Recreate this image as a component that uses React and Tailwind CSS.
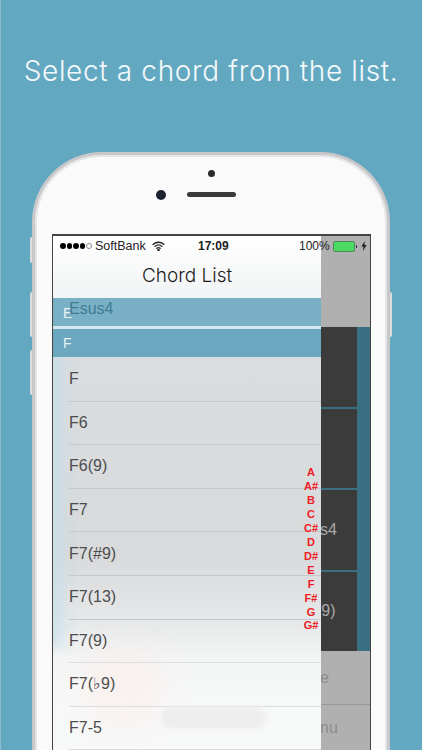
import React from 'react'

const chords = ['F', 'F6', 'F6(9)', 'F7', 'F7(#9)', 'F7(13)', 'F7(9)', 'F7(♭9)', 'F7-5']
const indexLetters = ['A', 'A#', 'B', 'C', 'C#', 'D', 'D#', 'E', 'F', 'F#', 'G', 'G#']

function Wifi() {
  return (
    <svg width="13" height="10" viewBox="0 0 13 10" fill="none" stroke="#222" strokeWidth="1.3" strokeLinecap="round">
      <path d="M1 3.4C4.2 .5 8.8 .5 12 3.4" />
      <path d="M3 5.4C5 3.7 8 3.7 10 5.4" />
      <path d="M4.8 7.3C5.8 6.5 7.2 6.5 8.2 7.3" />
      <circle cx="6.5" cy="8.9" r=".6" fill="#222" />
    </svg>
  )
}

function StatusBar() {
  return (
    <div className="absolute left-0 right-0 top-0 h-[20px] flex items-center pl-[7px] text-[12.5px] text-[#222] font-['Liberation_Sans',sans-serif]">
      <div className="flex items-center gap-[1px] w-[35px]">
        <span className="w-[5.5px] h-[5.5px] rounded-full bg-black" />
        <span className="w-[5.5px] h-[5.5px] rounded-full bg-black" />
        <span className="w-[5.5px] h-[5.5px] rounded-full bg-black" />
        <span className="w-[5.5px] h-[5.5px] rounded-full bg-black" />
        <span className="w-[5.5px] h-[5.5px] rounded-full border border-[#888]" />
      </div>
      <span className="w-[57px]">SoftBank</span>
      <Wifi />
      <span className="ml-[33px] font-bold text-[12px] w-[30px] text-center">17:09</span>
      <span className="ml-[71px] w-[30px] text-[12px]">100%</span>
      <div className="flex items-center ml-[4px]">
        <div className="w-[22px] h-[11px] rounded-[2px] bg-[#4cd964] border border-[#4a8a5a]" />
        <div className="w-[1px] h-[3px] bg-[#333] ml-[1px]" />
      </div>
      <svg className="ml-[4px]" width="6" height="10" viewBox="0 0 6 10" fill="#222">
        <path d="M3.9 0 .3 5.6h2.2L1.9 10l3.8-6H3.4z" />
      </svg>
    </div>
  )
}

function Drawer() {
  return (
    <div className="relative w-[268px] flex flex-col shrink-0 bg-[#f5f6f6]">
      <div className="h-[62px] flex items-end justify-center pb-[8px] bg-gradient-to-b from-[#ffffff] to-[#f1f3f4]">
        <span className="text-[19px] leading-[28px] text-[#1c1c1c] font-['Inter',sans-serif] font-light">Chord List</span>
      </div>
      <div className="h-[28px] bg-[#79b0c5] flex items-center pl-[10px] pt-[2px] text-[14px] text-[#e8f3f6] font-['Liberation_Sans',sans-serif]">E</div>
      <div className="h-[3px] bg-[#d5e6ec]" />
      <div className="h-[28px] bg-[#6ba8bf] flex items-center pl-[10px] text-[14px] text-[#e8f3f6] font-['Liberation_Sans',sans-serif]">F</div>
      <div className="relative flex-1 overflow-hidden pl-[16px] pt-[1px] bg-[linear-gradient(to_bottom,#dadddf_0,#d8dadb_200px,#e6e8e9_265px,#f3f4f4_300px,#f7f8f8_340px,#f7f8f8_100%)]">
        <div className="absolute left-[-6px] top-[-10px] w-[24px] h-[300px] bg-gradient-to-r from-[#c4deea] to-transparent blur-[6px]" />
        <div className="absolute left-[30px] top-[290px] w-[80px] h-[80px] rounded-full bg-[#fbeeea] opacity-60 blur-[14px]" />
        {chords.map((c, i) => (
          <div key={c} className={`relative h-[43.6px] flex items-center border-b text-[16px] text-[#4c4c4c] font-['Liberation_Sans',sans-serif] ${i < 6 ? 'border-[#c4c8cc]' : 'border-[#dcdfe2]'}`}>
            {c}
          </div>
        ))}
      </div>
      {/* chord row scrolling under the section header */}
      <span className="absolute left-[16px] top-[61px] text-[16px] text-[#3f7c95] font-['Liberation_Sans',sans-serif]">Esus4</span>
      {/* blurred patch */}
      <div className="absolute left-[108px] top-[471px] w-[105px] h-[22px] rounded-[10px] bg-[#eeeeee] blur-[2px]" />
      {/* index */}
      <div className="absolute right-0 top-[230px] w-[20px] flex flex-col items-center text-[11px] leading-[13.95px] font-bold text-[#ee1c25] font-['Liberation_Sans',sans-serif]">
        {indexLetters.map((l) => (
          <span key={l}>{l}</span>
        ))}
      </div>
    </div>
  )
}

function BackCell({ text, shift, last }) {
  return (
    <div className={`h-[79.5px] overflow-hidden flex items-center text-[16px] text-[#a9a9a9] bg-[#3b3b3b] font-['Liberation_Sans',sans-serif] ${last ? '' : 'mb-[2px]'}`}>
      <span className={shift ? 'ml-[-5px]' : 'ml-[-1px]'}>{text}</span>
    </div>
  )
}

function BackPanel() {
  return (
    <div className="flex-1 flex flex-col bg-[#b0b0b0] overflow-hidden">
      <div className="h-[91px] shrink-0" />
      <div className="h-[324px] shrink-0 flex bg-[#3a6f82]">
        <div className="w-[36px]">
          <BackCell />
          <BackCell />
          <BackCell text="s4" />
          <BackCell text="(9)" shift last />
        </div>
      </div>
      <div className="h-[54px] shrink-0 flex items-center border-b border-[#999] text-[16px] text-[#8c8c8c] font-['Liberation_Sans',sans-serif]">
        <span className="ml-[-1px]">e</span>
      </div>
      <div className="flex-1 flex items-center text-[16px] text-[#8c8c8c] font-['Liberation_Sans',sans-serif]">
        <span className="ml-[-1px]">nu</span>
      </div>
    </div>
  )
}

export default function App() {
  return (
    <div className="w-[422px] h-[750px] overflow-hidden bg-[#63a8c1] shadow-[inset_1px_0_0_#88bccf]">
      <h1 className="pt-[52px] h-[152px] text-center text-[28px] leading-[38px] tracking-[0.65px] text-[#f3f8fa] font-['Inter',sans-serif] font-light whitespace-nowrap">
        Select a chord from the list.
      </h1>
      <div className="relative mx-[32px] w-[358px] h-[640px] rounded-t-[70px] border-[3px] border-b-0 border-[#c8c8ca] bg-[#fafafa] shadow-[inset_0_0_0_2px_#e6e6e8]">
        {/* side buttons */}
        <div className="absolute left-[-5px] top-[82px] w-[2px] h-[26px] rounded-l bg-[#dcdcdc]" />
        <div className="absolute left-[-5px] top-[137px] w-[2px] h-[45px] rounded-l bg-[#dcdcdc]" />
        <div className="absolute left-[-5px] top-[195px] w-[2px] h-[45px] rounded-l bg-[#dcdcdc]" />
        <div className="absolute right-[-5px] top-[137px] w-[2px] h-[45px] rounded-r bg-[#dcdcdc]" />
        <div className="flex flex-col items-center pt-[15px] h-[79px]">
          <span className="w-[7px] h-[7px] rounded-full bg-[#2a2a2a]" />
          <div className="relative mt-[15px] flex items-center justify-center">
            <span className="absolute left-[-31px] w-[10px] h-[10px] rounded-full bg-[#1c2130]" />
            <span className="w-[49px] h-[5px] rounded-full bg-[#3a3a3a]" />
          </div>
        </div>
        <div className="relative ml-[17px] mr-[16px] h-[516px] flex border-t-[2px] border-l border-r border-[#444] overflow-hidden">
          <Drawer />
          <BackPanel />
          <StatusBar />
        </div>
      </div>
    </div>
  )
}
